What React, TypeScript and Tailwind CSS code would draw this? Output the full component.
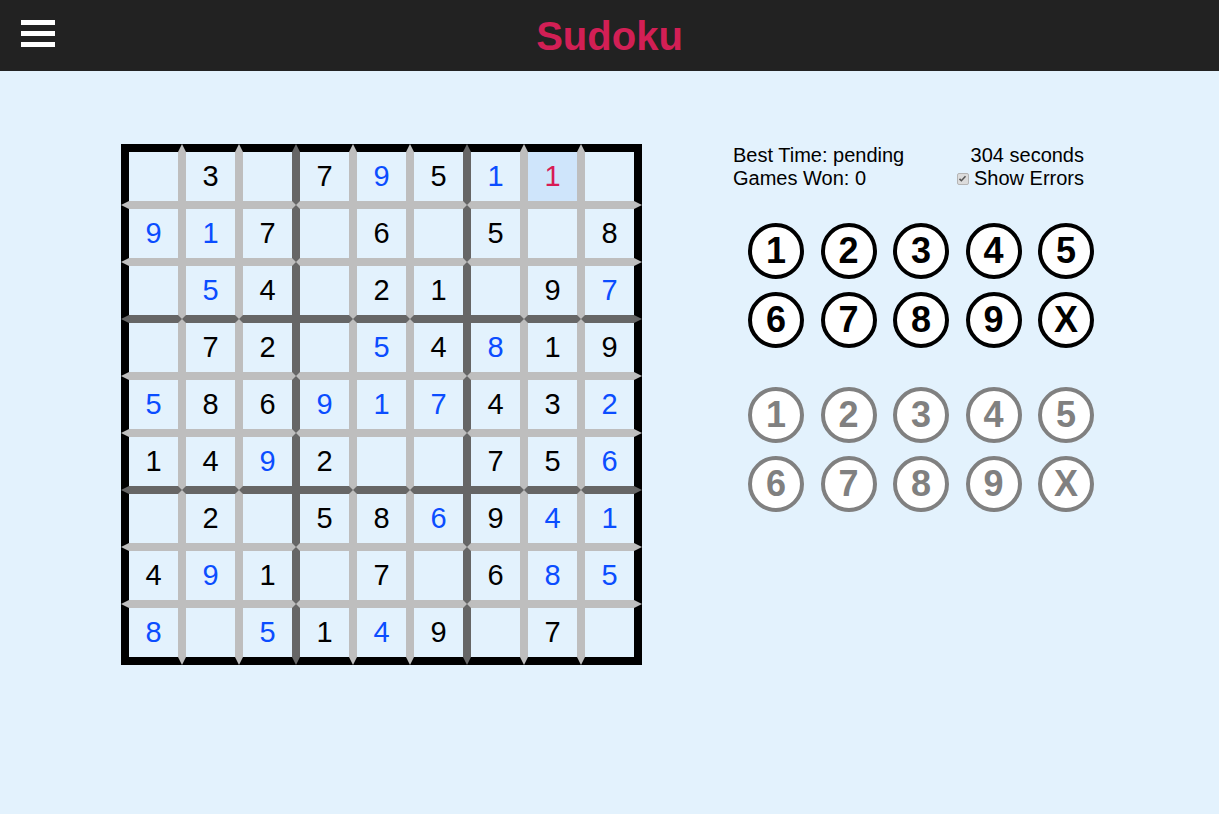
import React from 'react';

// 0 = empty, 'k' = given (black), 'b' = entered (blue), 'r' = error (red)
type Cell = { v: number; c: 'k' | 'b' | 'r' };

const raw: string[] = [
    '. 3k . 7k 9b 5k 1b 1r .',
    '9b 1b 7k . 6k . 5k . 8k',
    '. 5b 4k . 2k 1k . 9k 7b',
    '. 7k 2k . 5b 4k 8b 1k 9k',
    '5b 8k 6k 9b 1b 7b 4k 3k 2b',
    '1k 4k 9b 2k . . 7k 5k 6b',
    '. 2k . 5k 8k 6b 9k 4b 1b',
    '4k 9b 1k . 7k . 6k 8b 5b',
    '8b . 5b 1k 4b 9k . 7k .',
];

const board: Cell[][] = raw.map((line) =>
    line.split(' ').map((t) => (t === '.' ? { v: 0, c: 'k' } : { v: Number(t[0]), c: t[1] as Cell['c'] }))
);

const selected = { r: 0, c: 7 };

function cellBorders(r: number, c: number) {
    const top = r === 0 ? 'border-t-8 border-t-black' : r % 3 === 0 ? 'border-t-4 border-t-[#666666]' : 'border-t-4 border-t-[#bebebe]';
    const bottom = r === 8 ? 'border-b-8 border-b-black' : r % 3 === 2 ? 'border-b-4 border-b-[#666666]' : 'border-b-4 border-b-[#bebebe]';
    const left = c === 0 ? 'border-l-8 border-l-black' : c % 3 === 0 ? 'border-l-4 border-l-[#666666]' : 'border-l-4 border-l-[#bebebe]';
    const right = c === 8 ? 'border-r-8 border-r-black' : c % 3 === 2 ? 'border-r-4 border-r-[#666666]' : 'border-r-4 border-r-[#bebebe]';
    return `${top} ${bottom} ${left} ${right}`;
}

const colorClass = {
    k: 'text-black',
    b: 'text-[#0b4dff]',
    r: 'text-[#d81b55]',
};

function Board() {
    return (
        <div className="flex flex-col shrink-0">
            {board.map((row, r) => (
                <div key={r} className="flex">
                    {row.map((cell, c) => {
                        const isSel = selected.r === r && selected.c === c;
                        return (
                            <div
                                key={c}
                                className={`box-content w-[49px] h-[49px] flex items-center justify-center text-[29px] leading-none ${cellBorders(r, c)} ${isSel ? 'bg-[#cfe5fb]' : ''} ${colorClass[cell.c]}`}
                            >
                                {cell.v ? cell.v : ''}
                            </div>
                        );
                    })}
                </div>
            ))}
        </div>
    );
}

const keys = ['1', '2', '3', '4', '5', '6', '7', '8', '9', 'X'];

function KeyPad({ muted }: { muted?: boolean }) {
    return (
        <div className="grid grid-cols-[repeat(5,56px)] gap-x-[16.5px] gap-y-[13px] pl-[15px]">
            {keys.map((k) => (
                <button
                    key={k}
                    className={`w-[56px] h-[56px] rounded-full bg-white border-4 flex items-center justify-center font-bold text-[36px] leading-none ${
                        muted ? 'border-[#808080] text-[#808080]' : 'border-black text-black'
                    }`}
                >
                    {k}
                </button>
            ))}
        </div>
    );
}

export default function App() {
    return (
        <div className="min-h-screen bg-[#e3f2fd]" style={{ fontFamily: '"Liberation Sans", Arial, sans-serif' }}>
            {/* Header */}
            <header className="h-[71px] bg-[#222222] grid grid-cols-[1fr_auto_1fr] items-center">
                <div className="self-start mt-[20px] ml-[21px] flex flex-col gap-[6px] w-[34px]">
                    <span className="block h-[5px] bg-white" />
                    <span className="block h-[5px] bg-white" />
                    <span className="block h-[5px] bg-white" />
                </div>
                <h1 className="text-[40px] font-bold text-[#d21f55] leading-none">Sudoku</h1>
                <div />
            </header>

            {/* Main */}
            <main className="flex pl-[121px] pt-[73px] gap-[91px]">
                <Board />

                <div className="w-[361px]">
                    <div className="w-[351px] text-[20px] leading-[23px] text-black">
                        <div className="flex justify-between">
                            <span>Best Time: pending</span>
                            <span>304 seconds</span>
                        </div>
                        <div className="flex justify-between">
                            <span>Games Won: 0</span>
                            <label className="flex items-center gap-[5px]">
                                <span className="w-[12px] h-[12px] rounded-[2px] bg-[#dcdcdc] border border-[#b5b5b5] flex items-center justify-center">
                                    <svg viewBox="0 0 12 12" className="w-[9px] h-[9px]">
                                        <path d="M2 6.5l2.5 2.5L10 3" fill="none" stroke="#555" strokeWidth={2} />
                                    </svg>
                                </span>
                                Show Errors
                            </label>
                        </div>
                    </div>

                    <div className="mt-[33px]">
                        <KeyPad />
                    </div>
                    <div className="mt-[39px]">
                        <KeyPad muted />
                    </div>
                </div>
            </main>
        </div>
    );
}
